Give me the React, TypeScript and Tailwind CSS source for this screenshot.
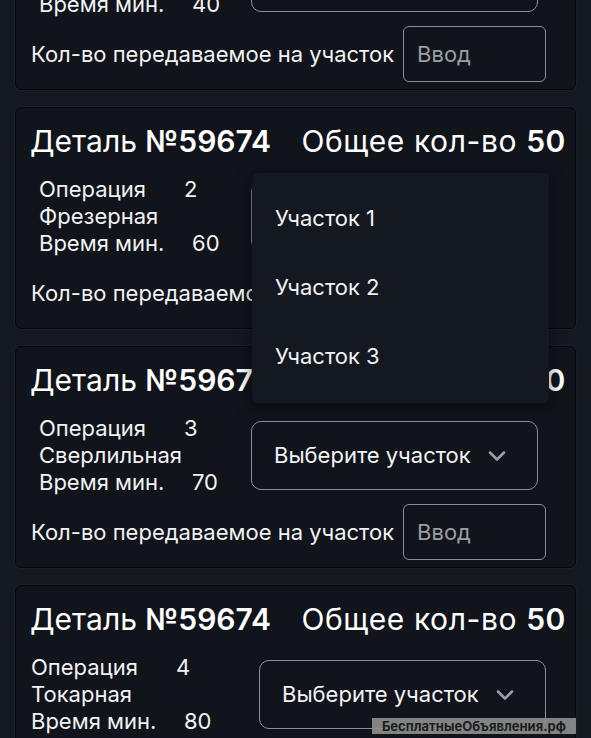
import { ChevronDown } from 'lucide-react'

interface Detail {
  op: number
  kind: string
  minutes: number
  infoPad: string
  infoWidth: string
  open?: boolean
}

const details: Detail[] = [
  { op: 1, kind: 'Токарная', minutes: 40, infoPad: 'pl-[23px]', infoWidth: 'w-[235px]' },
  { op: 2, kind: 'Фрезерная', minutes: 60, infoPad: 'pl-[23px]', infoWidth: 'w-[235px]', open: true },
  { op: 3, kind: 'Сверлильная', minutes: 70, infoPad: 'pl-[23px]', infoWidth: 'w-[235px]' },
  { op: 4, kind: 'Токарная', minutes: 80, infoPad: 'pl-[15px]', infoWidth: 'w-[243px]' },
]

const areas = ['Участок 1', 'Участок 2', 'Участок 3']

function AreaSelect({ open }: { open?: boolean }) {
  return (
    <div className="relative">
      <button className="flex h-[69px] w-[287px] items-center gap-[12px] rounded-[10px] border border-[#8b8f96] pl-[22px] text-[22px] text-[#f1f2f4]">
        Выберите участок
        <ChevronDown className="h-7 w-7 text-[#9aa0a8]" strokeWidth={2.2} />
      </button>
      {open && (
        <div className="absolute left-px top-[-9px] z-10 flex h-[230px] w-[297px] flex-col rounded-md bg-[#141821] pt-[11px] shadow-[0_4px_16px_rgba(0,0,0,0.5)]">
          {areas.map((a) => (
            <div key={a} className="flex h-[69px] items-center px-[23px] text-[22px] text-[#f1f2f4]">
              {a}
            </div>
          ))}
        </div>
      )}
    </div>
  )
}

function DetailCard({ d }: { d: Detail }) {
  return (
    <section className="rounded-md border border-[#06080b] bg-[#11141b] pb-[7px] pt-4 shadow-[0_0_0_1px_rgba(255,255,255,0.03)]">
      <header className="flex h-[34px] items-center justify-between pl-[14px] pr-[9px] text-[30px] leading-[34px] text-white">
        <span>
          Деталь <b className="font-semibold">№59674</b>
        </span>
        <span className="tracking-[0.02em]">
          Общее кол-во <b className="font-semibold">50</b>
        </span>
      </header>
      <div className="mt-[18px] flex items-center">
        <div className={`${d.infoPad} ${d.infoWidth} text-[22px] leading-[27px] text-[#f1f2f4]`}>
          <div>
            <span className="inline-block w-[145px]">Операция</span>
            {d.op}
          </div>
          <div>{d.kind}</div>
          <div>
            <span className="inline-block w-[153px]">Время мин.</span>
            {d.minutes}
          </div>
        </div>
        <AreaSelect open={d.open} />
      </div>
      <div className="mt-[8px] flex items-center gap-[9px] pl-[15px]">
        <span className="text-[22px] text-[#f1f2f4]">Кол-во передаваемое на участок</span>
        <input
          placeholder="Ввод"
          className="h-[56px] w-[143px] rounded-md border border-[#8b8f96] bg-transparent pl-[13px] text-[22px] text-white outline-none placeholder:text-[#9a9ea5]"
        />
      </div>
    </section>
  )
}

export default function App() {
  return (
    <div
      className="relative h-[738px] overflow-hidden bg-[#141821]"
      style={{ fontFamily: 'Inter, "Noto Sans", sans-serif' }}
    >
      <div className="-mt-[132px] flex flex-col gap-[17px] px-[15px]">
        {details.map((d) => (
          <DetailCard key={d.op} d={d} />
        ))}
      </div>
      <div className="absolute bottom-[4px] right-[15px] bg-[#8f8f8f]/90 px-[10px] text-[13px] font-bold leading-[16px] text-[#1d1d1d]">
        БесплатныеОбъявления.рф
      </div>
    </div>
  )
}
